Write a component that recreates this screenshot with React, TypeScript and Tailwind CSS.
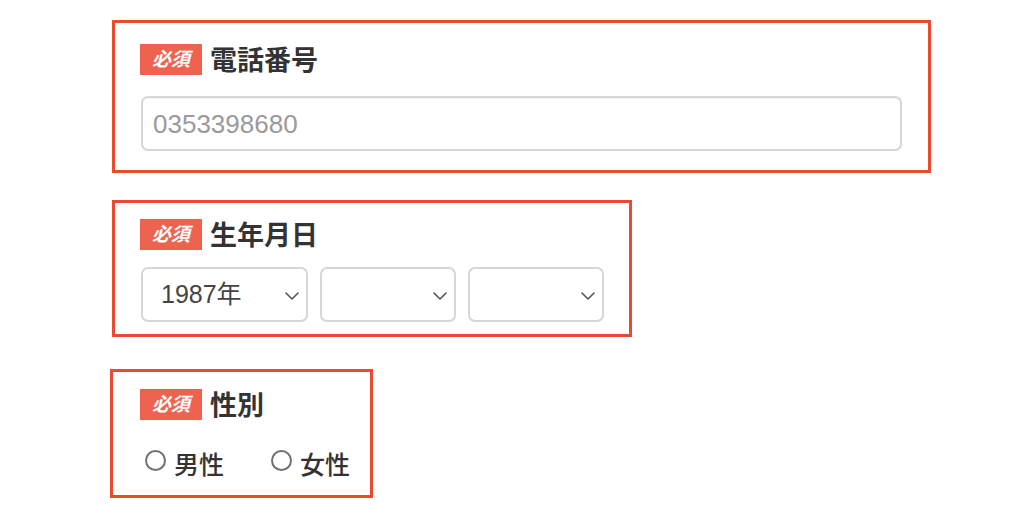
const jp = "font-['Liberation_Sans','Noto_Sans_CJK_JP',sans-serif]"

function Badge() {
  return (
    <span className="flex h-[31px] w-[62px] items-center justify-center bg-[#ee6350] text-[19px] font-bold italic leading-none text-white">
      必須
    </span>
  )
}

function Heading({ label }: { label: string }) {
  return (
    <div className="flex h-[31px] items-center">
      <Badge />
      <span className="ml-2 mt-[3px] text-[27px] font-bold leading-none text-[#333]">{label}</span>
    </div>
  )
}

function Chevron() {
  return (
    <svg width="14" height="8" viewBox="0 0 14 8" fill="none" className="absolute right-[7px] top-[23px]">
      <path d="M1 1l6 6 6-6" stroke="#555" strokeWidth="1.6" strokeLinecap="round" strokeLinejoin="round" />
    </svg>
  )
}

function SelectBox({ value, width }: { value?: string; width: string }) {
  return (
    <div className={`relative h-[55px] ${width} rounded-[7px] border-2 border-[#d6d6d6] bg-white`}>
      {value && (
        <span className="absolute left-[18px] top-[13px] text-[25px] leading-none text-[#444]">{value}</span>
      )}
      <Chevron />
    </div>
  )
}

function Radio({ label }: { label: string }) {
  return (
    <label className="flex items-center">
      <span className="mb-[9px] h-[21px] w-[21px] rounded-full border-2 border-[#707070] bg-white" />
      <span className="ml-2 text-[25px] font-medium leading-none text-[#333]">{label}</span>
    </label>
  )
}

export default function App() {
  return (
    <div className={`flex h-[527px] w-[1024px] flex-col items-start bg-white pl-[112px] pt-[20px] ${jp}`}>
      <section className="h-[153px] w-[819px] border-[3px] border-[#ea4a2f] px-[25px] pt-[21px]">
        <Heading label="電話番号" />
        <div className="mt-[21px] ml-px flex h-[55px] w-[761px] items-center rounded-[7px] border-2 border-[#d6d6d6] bg-white pl-[10px] shadow-[inset_0_1px_1px_rgba(0,0,0,0.04)]">
          <span className="text-[26px] leading-none text-[#9a9a9a]">0353398680</span>
        </div>
      </section>

      <section className="mt-[27px] h-[137px] w-[520px] border-[3px] border-[#ea4a2f] px-[25px] pt-[16px]">
        <Heading label="生年月日" />
        <div className="mt-[17px] ml-px flex gap-3">
          <SelectBox value="1987年" width="w-[167px]" />
          <SelectBox width="w-[136px]" />
          <SelectBox width="w-[136px]" />
        </div>
      </section>

      <section className="mt-[32px] -ml-[2px] h-[129px] w-[263px] border-[3px] border-[#ea4a2f] pl-[27px] pt-[17px]">
        <Heading label="性別" />
        <div className="mt-[30px] flex items-center gap-[47px] pl-[5px]">
          <Radio label="男性" />
          <Radio label="女性" />
        </div>
      </section>
    </div>
  )
}
